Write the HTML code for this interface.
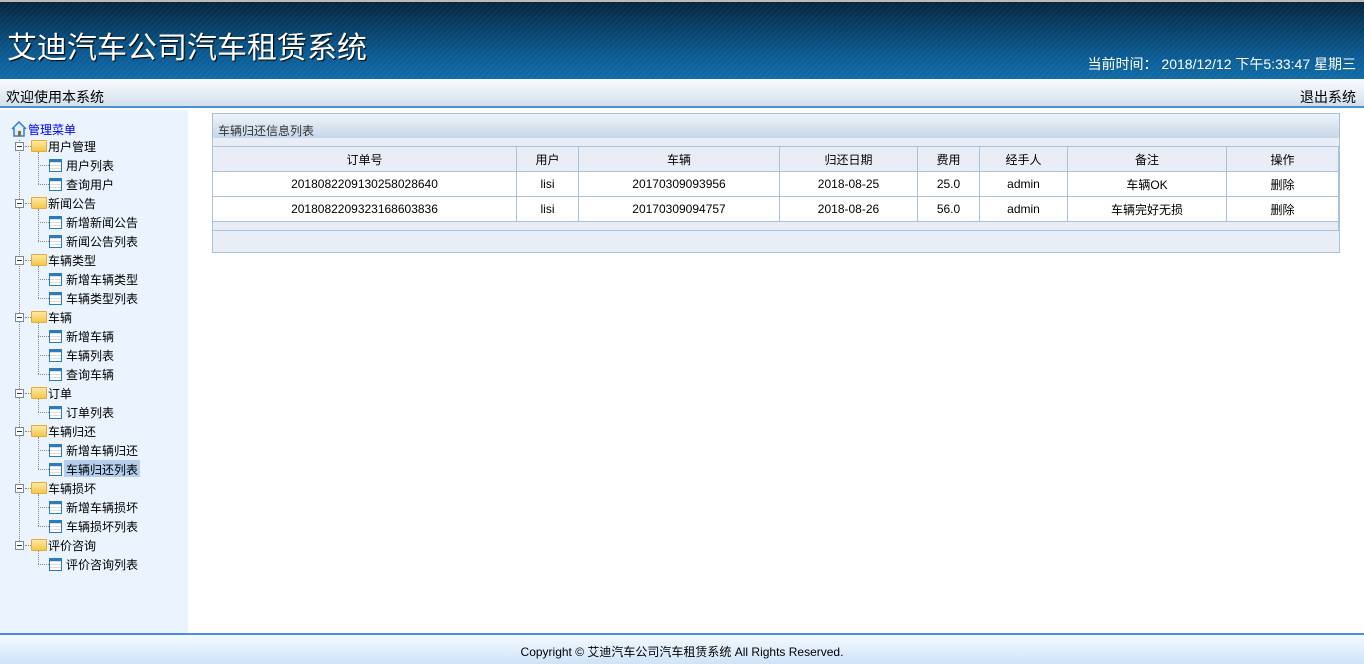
<!DOCTYPE html>
<html><head><meta charset="utf-8"><style>
*{margin:0;padding:0;box-sizing:border-box}
body{width:1364px;height:664px;overflow:hidden;font-family:"Liberation Sans","Noto Sans CJK SC",sans-serif;font-size:12px;color:#000;background:#fff;position:relative}
#hd{position:absolute;left:0;top:0;width:1364px;height:79px;border-top:2px solid #bbb;background:repeating-linear-gradient(135deg,rgba(255,255,255,0.04) 0 2px,rgba(0,0,0,0) 2px 4px),linear-gradient(#03243d,#0a5a92 70%,#0f6aa6)}
#hd h1{position:absolute;left:7px;top:21px;font-size:30px;font-weight:normal;color:#fff;text-shadow:1px 1px 1px #000}
#hd .t{position:absolute;right:8px;top:52px;color:#fff;font-size:14px}
#bar{position:absolute;left:0;top:79px;width:1364px;height:29px;background:linear-gradient(#fafcfe,#d3e0ec);border-bottom:2px solid #4a90d6;font-size:14px}
#bar .l{position:absolute;left:6px;top:8px}
#bar .r{position:absolute;right:8px;top:8px}
#side{position:absolute;left:0;top:110px;width:188px;height:523px;background:#eaf3fe}
.n{position:absolute;white-space:nowrap;font-size:12px}
.pm{position:absolute;width:9px;height:9px;border:1px solid #7a8a9a;background:#fff}
.pm:after{content:"";position:absolute;left:1px;top:3px;width:5px;height:1px;background:#333}
.fd{position:absolute;width:16px;height:12px;background:linear-gradient(#fde9a2,#f5c64b);border:1px solid #e3ad3a;border-radius:1px}
.pg{position:absolute;width:13px;height:13px;border:1px solid #2a7cc0;background:repeating-linear-gradient(#ddd 0 1px,#fff 1px 3px);border-top-width:3px}
.vl{position:absolute;border-left:1px dotted #888}
.hl{position:absolute;border-top:1px dotted #888}
#box{position:absolute;left:212px;top:113px;width:1128px;height:140px;border:1px solid #a8c2dc;background:#e9eef6}
#box .ti{position:absolute;left:0;top:0;width:1126px;height:24px;background:linear-gradient(#eef3fa,#c6d6e8);font-size:12px;color:#333;padding:8px 0 0 5px}
table{position:absolute;left:-1px;top:32px;border-collapse:collapse;width:1127px}
td,th{border:1px solid #a8c2dc;height:25px;text-align:center;font-weight:normal;font-size:12px}
th{background:#e9eef6}
td{background:#fff}
#ft{position:absolute;left:0;top:633px;width:1364px;height:31px;border-top:2px solid #4a90d6;background:linear-gradient(#f4f9ff,#cfe3f8);text-align:center;padding-top:8px;font-size:12px}
</style></head><body>
<div id="hd"><h1>艾迪汽车公司汽车租赁系统</h1><div class="t">当前时间： 2018/12/12 下午5:33:47 星期三</div></div>
<div id="bar"><span class="l">欢迎使用本系统</span><span class="r">退出系统</span></div>
<div id="side">
<svg style="position:absolute;left:11px;top:11px" width="16" height="16" viewBox="0 0 16 16"><path d="M1 8 L8 1 L15 8 M3 7 V15 H13 V7" fill="#dfeefe" stroke="#3a7ac8" stroke-width="1.5"/><rect x="7" y="10" width="3" height="5" fill="#8a6a3a"/></svg>
<div class="n" style="left:28px;top:11px;color:#0000ee">管理菜单</div>
<div class="vl" style="left:19px;top:30px;height:405px"></div>
</div>
<div id="tree" style="position:absolute;left:0;top:0"></div>
<div id="box"><div class="ti">车辆归还信息列表</div>
<table>
<tr><th style="width:304px">订单号</th><th style="width:62px">用户</th><th style="width:201px">车辆</th><th style="width:138px">归还日期</th><th style="width:62px">费用</th><th style="width:88px">经手人</th><th style="width:159px">备注</th><th>操作</th></tr>
<tr><td>2018082209130258028640</td><td>lisi</td><td>20170309093956</td><td>2018-08-25</td><td>25.0</td><td>admin</td><td>车辆OK</td><td>删除</td></tr>
<tr><td>2018082209323168603836</td><td>lisi</td><td>20170309094757</td><td>2018-08-26</td><td>56.0</td><td>admin</td><td>车辆完好无损</td><td>删除</td></tr>
<tr><td colspan="8" style="height:9px;background:#e9eef6"></td></tr>
</table></div>
<div id="ft">Copyright © 艾迪汽车公司汽车租赁系统 All Rights Reserved.</div>
<script>
var T=[["用户管理",["用户列表","查询用户"]],["新闻公告",["新增新闻公告","新闻公告列表"]],["车辆类型",["新增车辆类型","车辆类型列表"]],["车辆",["新增车辆","车辆列表","查询车辆"]],["订单",["订单列表"]],["车辆归还",["新增车辆归还","车辆归还列表"]],["车辆损坏",["新增车辆损坏","车辆损坏列表"]],["评价咨询",["评价咨询列表"]]];
var h="",y=146;
T.forEach(function(g){
 h+='<div class="pm" style="left:15px;top:'+(y-4)+'px"></div><div class="hl" style="left:25px;top:'+y+'px;width:6px"></div><div class="fd" style="left:31px;top:'+(y-6)+'px"></div><div class="n" style="left:48px;top:'+(y-8)+'px">'+g[0]+'</div>';
 var y0=y;y+=19;
 g[1].forEach(function(c){
  var sel=c=="车辆归还列表";
  h+='<div class="hl" style="left:38px;top:'+y+'px;width:11px"></div><div class="pg" style="left:49px;top:'+(y-6)+'px"></div>'+(sel?'<div style="position:absolute;left:64px;top:'+(y-9)+'px;width:76px;height:17px;background:#b4cfee"></div>':'')+'<div class="n" style="left:66px;top:'+(y-8)+'px">'+c+'</div>';
  y+=19;
 });
 h+='<div class="vl" style="left:38px;top:'+(y0+6)+'px;height:'+(y-19-y0-6)+'px"></div>';
});
document.getElementById('tree').innerHTML=h;
</script>
</body></html>
